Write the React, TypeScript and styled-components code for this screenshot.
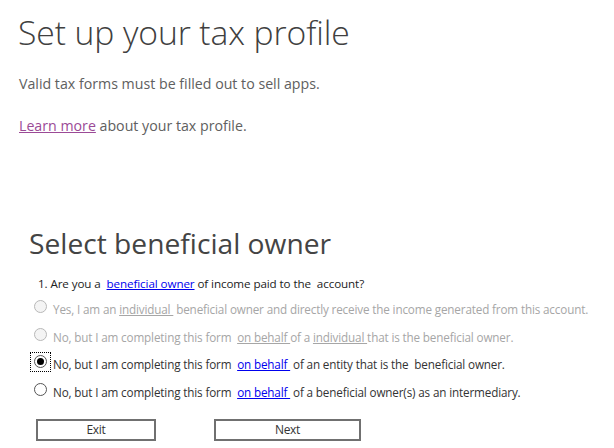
import React from "react";
import styled, { createGlobalStyle } from "styled-components";

const Global = createGlobalStyle`
  html, body { margin: 0; padding: 0; background: #ffffff; }
  body { font-family: "Open Sans", "Noto Sans", sans-serif; }
`;

const Page = styled.div`
  width: 614px;
  height: 448px;
  overflow: hidden;
  padding: 0 0 0 19px;
  box-sizing: border-box;
  display: flex;
  flex-direction: column;
`;

const Title = styled.h1`
  margin: 9px 0 0 -1px;
  font-size: 33.7px;
  line-height: 46px;
  font-weight: 300;
  color: #404040;
  letter-spacing: -0.1px;
`;

const Para = styled.p<{ $top: number }>`
  margin: ${(p) => p.$top}px 0 0 0;
  font-size: 14.2px;
  line-height: 20px;
  color: #606060;
`;

const PurpleLink = styled.a`
  color: #9b4a96;
  text-decoration: underline;
`;

const Section = styled.section`
  margin-top: 90px;
  padding-left: 10px;
  display: flex;
  flex-direction: column;
`;

const SubTitle = styled.h2`
  margin: 0;
  font-size: 28.2px;
  line-height: 34px;
  font-weight: 400;
  color: #444444;
`;

const Question = styled.div`
  margin: 16px 0 3px 9px;
  font-size: 11.65px;
  line-height: 16px;
  color: #222222;
  letter-spacing: -0.1px;
  white-space: pre;
`;

const BlueLink = styled.a`
  color: #0000ee;
  text-decoration: underline;
`;

const GrayU = styled.span`
  text-decoration: underline;
`;

const Options = styled.div`
  display: flex;
  flex-direction: column;
`;

const Option = styled.label<{ $disabled?: boolean }>`
  display: flex;
  align-items: center;
  height: 27.7px;
  font-size: 11.7px;
  letter-spacing: -0.15px;
  color: ${(p) => (p.$disabled ? "#a6a6a6" : "#333333")};
  white-space: pre;
`;

const RadioWrap = styled.span<{ $focus?: boolean }>`
  width: 19px;
  height: 18px;
  margin: -5px 3px 0 2px;
  display: flex;
  align-items: center;
  justify-content: center;
  outline: ${(p) => (p.$focus ? "1px dotted #000" : "none")};
`;

const RadioCircle = styled.span<{ $disabled?: boolean }>`
  width: 11px;
  height: 11px;
  border-radius: 50%;
  border: 1px solid ${(p) => (p.$disabled ? "#b8b8b8" : "#555555")};
  background: ${(p) => (p.$disabled ? "#f4f4f4" : "#ffffff")};
  display: flex;
  align-items: center;
  justify-content: center;
`;

const Dot = styled.span`
  width: 7px;
  height: 7px;
  border-radius: 50%;
  background: #000;
`;

const Buttons = styled.div`
  display: flex;
  gap: 58px;
  margin: 13px 0 0 7px;
`;

const Button = styled.button<{ $w: number }>`
  width: ${(p) => p.$w}px;
  height: 22px;
  border: 2px solid #707070;
  background: #ffffff;
  font-family: "Open Sans", "Noto Sans", sans-serif;
  font-size: 12px;
  color: #333333;
  padding: 0;
  letter-spacing: -0.3px;
`;

function Radio({ disabled, checked, focus }: { disabled?: boolean; checked?: boolean; focus?: boolean }) {
  return (
    <RadioWrap $focus={focus}>
      <RadioCircle $disabled={disabled}>{checked ? <Dot /> : null}</RadioCircle>
    </RadioWrap>
  );
}

export default function App() {
  return (
    <>
      <Global />
      <Page>
        <Title>Set up your tax profile</Title>
        <Para $top={19}>Valid tax forms must be filled out to sell apps.</Para>
        <Para $top={22}>
          <PurpleLink href="#">Learn more</PurpleLink> about your tax profile.
        </Para>
        <Section>
          <SubTitle>Select beneficial owner</SubTitle>
          <Question>
            1. Are you a  <BlueLink href="#">beneficial owner</BlueLink> of income paid to the  account?
          </Question>
          <Options>
            <Option $disabled>
              <Radio disabled />
              {"Yes, I am an "}
              <GrayU>{"individual "}</GrayU>
              {" beneficial owner and directly receive the income generated from this account."}
            </Option>
            <Option $disabled>
              <Radio disabled />
              {"No, but I am completing this form  "}
              <GrayU>{"on behalf "}</GrayU>
              {"of a "}
              <GrayU>{"individual "}</GrayU>
              {"that is the beneficial owner."}
            </Option>
            <Option>
              <Radio checked focus />
              {"No, but I am completing this form  "}
              <BlueLink href="#">{"on behalf "}</BlueLink>
              {" of an entity that is the  beneficial owner."}
            </Option>
            <Option>
              <Radio />
              {"No, but I am completing this form  "}
              <BlueLink href="#">{"on behalf "}</BlueLink>
              {" of a beneficial owner(s) as an intermediary."}
            </Option>
          </Options>
          <Buttons>
            <Button $w={120}>Exit</Button>
            <Button $w={147}>Next</Button>
          </Buttons>
        </Section>
      </Page>
    </>
  );
}
